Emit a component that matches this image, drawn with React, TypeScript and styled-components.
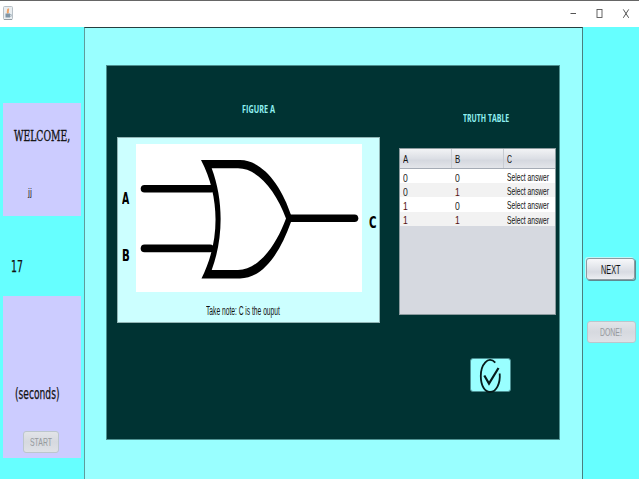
import React, { useLayoutEffect, useRef, useState } from "react";
import styled, { createGlobalStyle } from "styled-components";

const Global = createGlobalStyle`
  * { box-sizing: border-box; }
  body { margin: 0; background: #fff; overflow: hidden; }
`;

const sans = '"Liberation Sans", Arial, sans-serif';
const tahoma = '"DejaVu Sans", Verdana, sans-serif';
const slab = '"DejaVu Serif", Georgia, serif';
const humanist = '"Open Sans", "Noto Sans", sans-serif';

const LabelBox = styled.div<{
  $w: number; $size: number; $color: string; $font: string; $bold?: boolean; $top: number; $left: number; $ink: number;
}>`
  flex: none;
  width: ${(p) => p.$w}px;
  height: ${(p) => Math.ceil(p.$size)}px;
  margin: ${(p) => p.$top}px 0 0 ${(p) => p.$left}px;
  font: ${(p) => (p.$bold ? 700 : 400)} ${(p) => p.$size}px/${(p) => Math.ceil(p.$size)}px ${(p) => p.$font};
  color: ${(p) => p.$color};
  white-space: nowrap;
  -webkit-text-stroke: ${(p) => p.$ink}px ${(p) => p.$color};
`;

const Stretch = styled.span`
  display: inline-block;
  transform-origin: 0 50%;
`;

interface LabelProps {
  text: string; w: number; size?: number; color?: string; font?: string;
  bold?: boolean; top?: number; left?: number; ink?: number;
}

/* A line of text condensed to a given width. */
function Label({ text, w, size = 11, color = "#111", font = sans, bold, top = 0, left = 0, ink = 0 }: LabelProps) {
  const ref = useRef<HTMLSpanElement>(null);
  const [scale, setScale] = useState(1);
  useLayoutEffect(() => {
    if (ref.current) setScale(w / ref.current.offsetWidth);
  }, [w, text]);
  return (
    <LabelBox $w={w} $size={size} $color={color} $font={font} $bold={bold} $top={top} $left={left} $ink={ink}>
      <Stretch ref={ref} style={{ transform: `scaleX(${scale})` }}>{text}</Stretch>
    </LabelBox>
  );
}

const Window = styled.div`
  width: 639px;
  height: 479px;
  display: flex;
  flex-direction: column;
  background: #66ffff;
  overflow: hidden;
`;

const TitleBar = styled.header`
  flex: none;
  height: 27px;
  border-top: 1px solid #666;
  background: #fff;
  display: flex;
  justify-content: space-between;
  padding: 5px 9px 0 3px;
`;

const Body = styled.div`
  flex: 1;
  display: grid;
  grid-template-columns: 84px 499px 56px;
`;

const Sidebar = styled.aside`
  display: flex;
  flex-direction: column;
  padding: 76px 3px 0 3px;
`;

const Card = styled.section<{ $h: number }>`
  height: ${(p) => p.$h}px;
  background: #ccccff;
  display: flex;
  flex-direction: column;
`;

const Timer = styled.div`
  height: 80px;
`;

const Center = styled.main`
  background: #99ffff;
  border: solid #4a7f7f;
  border-width: 1px 1px 0;
  border-top-color: #263f3f;
  border-left-color: #5f9c9c;
  padding: 37px 22px 0 21px;
`;

const Board = styled.div`
  height: 375px;
  background: #003333;
  border: 1px solid #4d9191;
  display: grid;
  grid-template-columns: 263px 157px;
  column-gap: 19px;
  padding-left: 10px;
`;

const Column = styled.div`
  display: flex;
  flex-direction: column;
`;

const Figure = styled.div`
  height: 186px;
  margin-top: 23px;
  background: #ccffff;
  border: 1px solid #91b5b5;
  display: flex;
  flex-direction: column;
`;

const Diagram = styled.div`
  display: grid;
  grid-template-columns: 18px 226px 17px;
  padding-top: 6px;
`;

const Table = styled.div`
  height: 167px;
  margin-top: 25px;
  background: #d6d9e0;
  border: 1px solid #8a9a9e;
`;

const Row = styled.div<{ $bg: string; $h: number }>`
  display: grid;
  grid-template-columns: 52px 52px 51px;
  height: ${(p) => p.$h}px;
  background: ${(p) => p.$bg};
`;

const HeadRow = styled(Row)`
  border-bottom: 1px solid #a5abb5;
`;

const HeadCell = styled.div`
  border-right: 1px solid #c8ccd2;
  &:last-child { border-right: 0; }
`;

const Button = styled.button<{ $w: number; $h: number; $off?: boolean; $left: number; $top: number }>`
  appearance: none;
  display: flex;
  padding: 0;
  width: ${(p) => p.$w}px;
  height: ${(p) => p.$h}px;
  margin: ${(p) => p.$top}px 0 0 ${(p) => p.$left}px;
  border: 1px solid ${(p) => (p.$off ? "#bcc6cc" : "#8d999f")};
  border-radius: 3px;
  background: ${(p) => (p.$off ? "linear-gradient(#e2e4e8, #d6d9df 50%, #dfe1e6)" : "linear-gradient(#f7f8fa, #dfe2e8 50%, #d8dbe2 65%, #eceef2)")};
  ${(p) => (p.$off ? "" : "box-shadow: 1px 1px 0 #5e8a90, -1px -1px 0 #c4f4f6;")}
`;

const CheckButton = styled.button`
  appearance: none;
  display: block;
  padding: 0;
  width: 41px;
  height: 34px;
  margin: 43px 0 0 71px;
  border: 1px solid #4d8f92;
  border-radius: 3px;
  background: #99ffff;
`;

const Icon = styled.svg`
  display: block;
`;

const rows = [["0", "0"], ["0", "1"], ["1", "0"], ["1", "1"]];

function JavaIcon() {
  return (
    <Icon width="10" height="14" viewBox="0 0 10 14">
      <rect x=".5" y=".5" width="9" height="13" rx="1" fill="#e9eef1" stroke="#b8c0c6" />
      <path d="M1 13.5H9" stroke="#949da4" />
      <path d="M5 2.6C5.8 4.4 4 5 5 7.4" stroke="#f0a468" strokeWidth="2" fill="none" />
      <path d="M2.5 7.5H7V11.5H2.5Z" fill="#8095a5" />
      <path d="M7 8.5H8.2V10.3H7" stroke="#a9b7c1" fill="none" />
    </Icon>
  );
}

function WindowControls() {
  return (
    <Icon width="62" height="16" viewBox="568 6 62 16">
      <path d="M570.5 13.5H576" stroke="#555" />
      <rect x="597" y="9.5" width="5" height="8" fill="none" stroke="#555" strokeWidth=".9" />
      <path d="M623.3 9.4L628.7 17.8M628.7 9.4L623.3 17.8" stroke="#555" />
    </Icon>
  );
}

function GateDrawing() {
  return (
    <Icon width="226" height="148" viewBox="136 144 226 148">
      <rect x="136" y="144" width="226" height="148" fill="#fff" />
      <g stroke="#000" strokeWidth="7.6" strokeLinecap="round">
        <path d="M144.5 188.8H211" />
        <path d="M144.5 248.4H210" />
        <path d="M291 218.2H354.5" />
      </g>
      <path
        fillRule="evenodd"
        d="M201 160H240C263 160 282 187 291 215V222C280 253 263 278.4 240 278.4H201.5C220.3 241 220.3 197 201 160Z
           M211.7 168.3H238C258 168.3 276 191 286 218.5C276 246 258 270 238 270H211.7C223.6 238 223.6 200 211.7 168.3Z"
      />
    </Icon>
  );
}

function CheckIcon() {
  return (
    <Icon width="39" height="34" viewBox="471 359 39 34" overflow="visible" fill="none" stroke="#071b1b" strokeWidth="1.8">
      <path d="M495.3 362.6C488 355 480.8 365 480.8 376C480.8 386 485 392 490 392C496.5 392 500.5 383 499.7 373.5" />
      <path d="M484.3 375.5L489 383.5L498.5 368" strokeWidth="2.2" />
    </Icon>
  );
}

export default function App() {
  return (
    <>
      <Global />
      <Window>
        <TitleBar>
          <JavaIcon />
          <WindowControls />
        </TitleBar>
        <Body>
          <Sidebar>
            <Card $h={113}>
              <Label text="WELCOME," w={56} size={15} font={slab} ink={0.35} top={26} left={11} />
              <Label text="jj" w={4} size={11} color="#333" top={43} left={25} />
            </Card>
            <Timer>
              <Label text="17" w={12} size={15.5} font={tahoma} ink={0.25} top={43} left={7.5} />
            </Timer>
            <Card $h={162}>
              <Label text="(seconds)" w={44.5} size={15} font={tahoma} ink={0.25} top={91} left={12} />
              <Button $off $w={36} $h={22} $left={20} $top={29} disabled>
                <Label text="START" w={22} size={11} color="#96999d" top={5} left={6} />
              </Button>
            </Card>
          </Sidebar>
          <Center>
            <Board>
              <Column>
                <Label text="FIGURE A" w={33} size={11} font={humanist} bold color="#8ff0f0" top={37} left={124.5} />
                <Figure>
                  <Diagram>
                    <Column>
                      <Label text="A" w={7.5} size={15} font={tahoma} bold color="#000" top={48} left={4} />
                      <Label text="B" w={7.5} size={15} font={tahoma} bold color="#000" top={42} left={4} />
                    </Column>
                    <GateDrawing />
                    <Column>
                      <Label text="C" w={7.5} size={15} font={tahoma} bold color="#000" top={72} left={6.5} />
                    </Column>
                  </Diagram>
                  <Label text="Take note: C is the ouput" w={74} size={12} top={13} left={87.5} />
                </Figure>
              </Column>
              <Column>
                <Label text="TRUTH TABLE" w={46} size={11} font={humanist} bold color="#8ff0f0" top={46} left={64} />
                <Table>
                  <HeadRow $h={20} $bg="linear-gradient(#f2f3f5, #dcdfe5 50%, #d5d8df 60%, #e3e5ea)">
                    {["A", "B", "C"].map((c) => (
                      <HeadCell key={c}>
                        <Label text={c} w={5} top={5} left={2.5} />
                      </HeadCell>
                    ))}
                  </HeadRow>
                  {rows.map(([a, b], i) => (
                    <Row key={i} $h={14.2} $bg={i % 2 ? "#f2f2f2" : "#fff"}>
                      <Label text={a} w={4.5} size={11.5} top={2.5} left={2.5} color={a === "1" ? "#511" : "#222"} />
                      <Label text={b} w={4.5} size={11.5} top={2.5} left={2.5} color={b === "1" ? "#511" : "#222"} />
                      <Label text="Select answer" w={42} top={3} left={2.5} />
                    </Row>
                  ))}
                </Table>
                <CheckButton aria-label="Submit">
                  <CheckIcon />
                </CheckButton>
              </Column>
            </Board>
          </Center>
          <Column>
            <Button $w={49} $h={22} $left={3} $top={231}>
              <Label text="NEXT" w={19.5} size={12} top={5} left={14} />
            </Button>
            <Button $off $w={49} $h={22} $left={4} $top={41} disabled>
              <Label text="DONE!" w={22} color="#96999d" top={5} left={12} />
            </Button>
          </Column>
        </Body>
      </Window>
    </>
  );
}
